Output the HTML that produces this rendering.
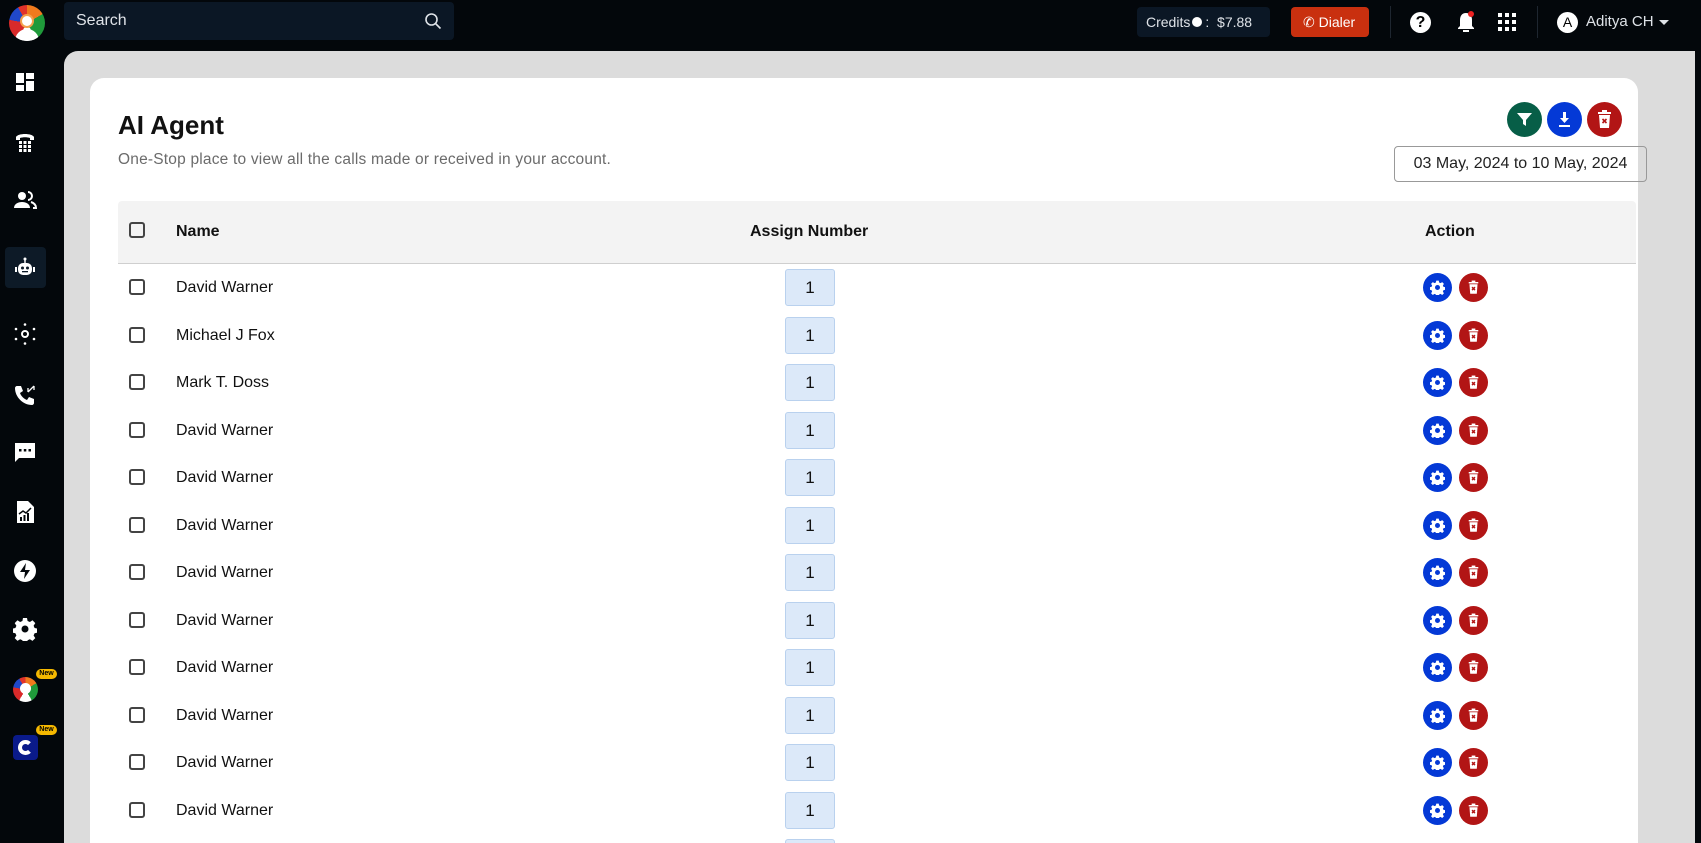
<!DOCTYPE html>
<html style="width:1701px;height:843px;overflow:hidden"><head><meta charset="utf-8"><style>
*{margin:0;padding:0;box-sizing:border-box}
html,body{width:1701px;height:843px;overflow:hidden}
body{background:#03070b;font-family:"Liberation Sans",sans-serif;position:relative}
#wrap{position:absolute;left:0;top:0;width:1701px;height:843px;overflow:hidden}
.abs{position:absolute}
.side{left:0;top:0;width:64px;height:843px;background:#03070b}
.ic{position:absolute;left:13px;width:24px;height:24px}
.gray{left:64px;top:51px;width:1631px;height:792px;background:#dcdcdc;border-top-left-radius:14px}
.card{left:90px;top:78px;width:1548px;height:765px;background:#fff;border-radius:14px 14px 0 0}
.row{position:absolute;left:118px;width:1518px;height:47px}
.cb{position:absolute;left:11px;width:16px;height:16px;border:2px solid #444;border-radius:3px;background:#fff}
.nm{position:absolute;left:58px;font-size:16px;color:#111}
.num{position:absolute;left:667px;width:50px;height:37px;background:#dce9f9;border:1px solid #b9d1ee;border-radius:3px;text-align:center;line-height:36px;font-size:17px;color:#111}
.rb{position:absolute;width:29px;height:29px;border-radius:50%}
</style></head><body><div id="wrap">
<div class="abs side"></div>
<div class="abs" style="left:9px;top:5px;width:36px;height:36px;border-radius:50%;background:conic-gradient(#f07a1d 0 60deg,#1f9a3a 60deg 150deg,#fff 150deg 210deg,#d92a2a 210deg 280deg,#2048c9 280deg 330deg,#e1322a 330deg 360deg);overflow:hidden">
<div class="abs" style="left:11px;top:9px;width:14px;height:14px;border-radius:50%;background:#fff;border:2px solid #f3a04a"></div>
<div class="abs" style="left:6px;top:24px;width:24px;height:16px;border-radius:12px 12px 0 0;background:#fff"></div></div>
<div class="abs" style="left:64px;top:2px;width:390px;height:38px;background:#0b1725;border-radius:4px"></div>
<div class="abs" style="left:76px;top:12px;color:#dfe3e8;font-size:16px">Search</div>
<svg class="abs" style="left:424px;top:12px" width="18" height="18" viewBox="0 0 18 18"><circle cx="7.5" cy="7.5" r="5.5" stroke="#dfe3e8" stroke-width="1.6" fill="none"/><path d="M11.5 11.5l5 5" stroke="#dfe3e8" stroke-width="1.6"/></svg>
<div class="abs" style="left:1137px;top:7px;width:133px;height:30px;background:#0b1725;border-radius:4px;color:#dfe3e8;font-size:14px;line-height:30px;padding-left:9px">Credits<span style="display:inline-block;width:10px;height:10px;background:#fff;border-radius:50%;margin:0 3px 0 2px"></span>:&nbsp; $7.88</div>
<div class="abs" style="left:1291px;top:7px;width:78px;height:30px;background:#c9300f;border-radius:4px;color:#fff;font-size:14px;line-height:30px;padding-left:12px">&#9990; Dialer</div>
<div class="abs" style="left:1390px;top:6px;width:1px;height:32px;background:#1e2630"></div>
<div class="abs" style="left:1410px;top:12px;width:21px;height:21px;border-radius:50%;background:#fff;color:#000;font-weight:bold;font-size:16px;text-align:center;line-height:21px">?</div>
<svg class="abs" style="left:1455px;top:10px" width="22" height="24" viewBox="0 0 22 24"><path d="M11 3c-4 0-6 3-6 7v6l-2 2v1h16v-1l-2-2v-6c0-4-2-7-6-7z" fill="#fff"/><rect x="8" y="20" width="6" height="2" fill="#fff"/><circle cx="16" cy="4" r="3" fill="#e22"/></svg>
<svg class="abs" style="left:1498px;top:13px" width="18" height="18"><g fill="#fff"><rect x="0" y="0" width="4" height="4"/><rect x="7" y="0" width="4" height="4"/><rect x="14" y="0" width="4" height="4"/><rect x="0" y="7" width="4" height="4"/><rect x="7" y="7" width="4" height="4"/><rect x="14" y="7" width="4" height="4"/><rect x="0" y="14" width="4" height="4"/><rect x="7" y="14" width="4" height="4"/><rect x="14" y="14" width="4" height="4"/></g></svg>
<div class="abs" style="left:1537px;top:6px;width:1px;height:32px;background:#1e2630"></div>
<div class="abs" style="left:1557px;top:12px;width:21px;height:21px;border-radius:50%;background:#fff;color:#000;font-size:14px;text-align:center;line-height:21px">A</div>
<div class="abs" style="left:1586px;top:13px;color:#dfe3e8;font-size:15px">Aditya CH</div>
<div class="abs" style="left:1659px;top:20px;border-left:5px solid transparent;border-right:5px solid transparent;border-top:5px solid #dfe3e8"></div>
<svg class="ic" style="top:70px" viewBox="0 0 24 24"><path d="M3 3h8v10H3zM13 3h8v6h-8zM13 11h8v10h-8zM3 15h8v6H3z" fill="#fff"/></svg>
<svg class="ic" style="top:129px" viewBox="0 0 24 24"><path d="M3 8c2-4 16-4 18 0v3h-4V9c-3-1-7-1-10 0v2H3z" fill="#fff"/><g fill="#fff"><rect x="6" y="12" width="3" height="3"/><rect x="10.5" y="12" width="3" height="3"/><rect x="15" y="12" width="3" height="3"/><rect x="6" y="16" width="3" height="3"/><rect x="10.5" y="16" width="3" height="3"/><rect x="15" y="16" width="3" height="3"/><rect x="6" y="20" width="3" height="3"/><rect x="10.5" y="20" width="3" height="3"/><rect x="15" y="20" width="3" height="3"/></g></svg>
<svg class="ic" style="top:188px" viewBox="0 0 24 24"><circle cx="9" cy="8" r="4" fill="#fff"/><path d="M1 20c0-4 4-6 8-6s8 2 8 6z" fill="#fff"/><path d="M15 4a4 4 0 010 8M18 14c3 1 5 3 5 6h-3" stroke="#fff" stroke-width="2" fill="none"/></svg>
<div class="abs" style="left:5px;top:247px;width:41px;height:41px;background:#0d1a27;border-radius:4px"></div>
<svg class="ic" style="top:256px" viewBox="0 0 24 24"><circle cx="12" cy="3" r="1.5" fill="#fff"/><rect x="11.3" y="3" width="1.4" height="4" fill="#fff"/><rect x="5" y="7" width="14" height="12" rx="5" fill="#fff"/><circle cx="9.5" cy="12" r="1.5" fill="#0d1a27"/><circle cx="14.5" cy="12" r="1.5" fill="#0d1a27"/><rect x="9" y="15" width="6" height="1.3" fill="#0d1a27"/><rect x="2" y="11" width="2" height="5" fill="#fff"/><rect x="20" y="11" width="2" height="5" fill="#fff"/></svg>
<svg class="ic" style="top:322px" viewBox="0 0 24 24"><circle cx="12" cy="12" r="3" stroke="#fff" stroke-width="2" fill="none"/><g fill="#fff"><circle cx="12" cy="2.5" r="1.3"/><circle cx="12" cy="21.5" r="1.3"/><circle cx="3" cy="7" r="1.3"/><circle cx="21" cy="7" r="1.3"/><circle cx="3" cy="17" r="1.3"/><circle cx="21" cy="17" r="1.3"/></g></svg>
<svg class="ic" style="top:383px" viewBox="0 0 24 24"><path d="M4 3h4l2 5-3 2c1 3 4 6 7 7l2-3 5 2v4c0 1-1 2-2 2C10 22 2 14 2 5c0-1 1-2 2-2z" fill="#fff"/><path d="M15 9l6-6M15 9v-4M21 3v4" stroke="#fff" stroke-width="1.3" fill="none"/></svg>
<svg class="ic" style="top:440px" viewBox="0 0 24 24"><path d="M2 3h20v15H6l-4 4z" fill="#fff"/><g fill="#03070b"><rect x="6" y="9" width="2.5" height="2.5"/><rect x="10.8" y="9" width="2.5" height="2.5"/><rect x="15.5" y="9" width="2.5" height="2.5"/></g></svg>
<svg class="ic" style="top:500px" viewBox="0 0 24 24"><path d="M4 1h11l6 6v16H4z" fill="#fff"/><g fill="#03070b"><rect x="7" y="17" width="2" height="4"/><rect x="10.5" y="15" width="2" height="6"/><rect x="14" y="13" width="2" height="8"/></g><path d="M6 14l4-3 3 2 5-5" stroke="#03070b" stroke-width="1.5" fill="none"/></svg>
<svg class="ic" style="top:559px" viewBox="0 0 24 24"><circle cx="12" cy="12" r="11" fill="#fff"/><path d="M13 4l-6 9h5l-1 7 6-9h-5z" fill="#03070b"/></svg>
<svg class="ic" style="top:617px" viewBox="0 0 24 24"><path d="M10 1h4l.6 3 2.3 1 2.6-1.7 2.8 2.8-1.7 2.6 1 2.3 3 .6v4l-3 .6-1 2.3 1.7 2.6-2.8 2.8-2.6-1.7-2.300 1-.6 3h-4l-.6-3-2.3-1-2.6 1.7-2.8-2.8 1.7-2.6-1-2.3-3-.6v-4l3-.6 1-2.3-1.7-2.6 2.8-2.8 2.6 1.7 2.3-1z" fill="#fff"/><circle cx="12" cy="12" r="3.5" fill="#03070b"/></svg>
<div class="abs" style="left:13px;top:677px;width:25px;height:25px;border-radius:50%;background:conic-gradient(#f07a1d 0 60deg,#1f9a3a 60deg 150deg,#fff 150deg 210deg,#d92a2a 210deg 280deg,#2048c9 280deg 330deg,#e1322a 330deg);overflow:hidden"><div class="abs" style="left:7px;top:6px;width:11px;height:11px;border-radius:50%;background:#fff"></div></div>
<div class="abs" style="left:36px;top:669px;width:21px;height:10px;border-radius:5px;background:#f5b800;font-size:7px;font-weight:bold;text-align:center;line-height:10px;color:#000">New</div>
<div class="abs" style="left:13px;top:735px;width:25px;height:25px;border-radius:4px;background:#0a1a8a"><div class="abs" style="left:5px;top:5px;width:15px;height:15px;border-radius:50%;border:4px solid #fff;border-right-color:transparent"></div></div>
<div class="abs" style="left:36px;top:725px;width:21px;height:10px;border-radius:5px;background:#f5b800;font-size:7px;font-weight:bold;text-align:center;line-height:10px;color:#000">New</div>
<div class="abs gray"></div>
<div class="abs card"></div>
<div class="abs" style="left:118px;top:110px;font-size:26px;font-weight:bold;color:#111">AI Agent</div>
<div class="abs" style="left:118px;top:151px;font-size:15.5px;color:#6b6b6b;letter-spacing:0.2px">One-Stop place to view all the calls made or received in your account.</div>
<div class="abs rb" style="left:1507px;top:102px;width:35px;height:35px;background:#075e47"><svg style="margin:9px" width="17" height="17" viewBox="0 0 17 17"><path d="M1 2h15l-6 7v6l-3-2V9z" fill="#fff"/></svg></div>
<div class="abs rb" style="left:1547px;top:102px;width:35px;height:35px;background:#0439d6"><svg style="margin:9px" width="17" height="17" viewBox="0 0 17 17"><path d="M7 1h3v6h3l-4.5 5L4 7h3z" fill="#fff"/><rect x="3" y="14" width="11" height="2" fill="#fff"/></svg></div>
<div class="abs rb" style="left:1587px;top:102px;width:35px;height:35px;background:#b21515"><svg style="margin:8px 10px" width="15" height="19" viewBox="0 0 15 19"><rect x="1" y="2" width="13" height="2" fill="#fff"/><rect x="5" y="0" width="5" height="2" fill="#fff"/><path d="M2 5h11l-1 13H3z" fill="#fff"/><path d="M5.5 9l4 4M9.5 9l-4 4" stroke="#b21515" stroke-width="1.6"/></svg></div>
<div class="abs" style="left:1394px;top:146px;width:253px;height:36px;border:1px solid #999;border-radius:4px;font-size:16px;color:#222;text-align:center;line-height:34px">03 May, 2024 to 10 May, 2024</div>
<div class="abs" style="left:118px;top:201px;width:1518px;height:63px;background:#f3f3f3;border-bottom:1px solid #cfcfcf;border-radius:4px 4px 0 0"></div>
<div class="abs cb" style="left:129px;top:222px;background:#f3f3f3"></div>
<div class="abs" style="left:176px;top:223px;font-size:16px;font-weight:bold;color:#111">Name</div>
<div class="abs" style="left:750px;top:223px;font-size:16px;font-weight:bold;color:#111">Assign Number</div>
<div class="abs" style="left:1425px;top:223px;font-size:16px;font-weight:bold;color:#111">Action</div>
<div id="rows"></div>
<script>
var names=["David Warner","Michael J Fox","Mark T. Doss","David Warner","David Warner","David Warner","David Warner","David Warner","David Warner","David Warner","David Warner","David Warner","David Warner"];
var h="";
for(var i=0;i<13;i++){var c=287.5+47.5*i;var t=c-23.5;
h+='<div class="row" style="top:'+t+'px"><div class="cb" style="top:15px"></div><div class="nm" style="top:15px">'+names[i]+'</div><div class="num" style="top:5px">1</div>'+
'<div class="rb" style="left:1305px;top:9px;background:#0439d6"><svg style="margin:7px" width="15" height="15" viewBox="0 0 24 24"><path d="M10 1h4l.6 3 2.3 1 2.6-1.7 2.8 2.8-1.7 2.6 1 2.3 3 .6v4l-3 .6-1 2.3 1.7 2.6-2.8 2.8-2.6-1.7-2.3 1-.6 3h-4l-.6-3-2.3-1-2.6 1.7-2.8-2.8 1.7-2.6-1-2.3-3-.6v-4l3-.6 1-2.3-1.7-2.6 2.8-2.8 2.6 1.7 2.3-1z" fill="#fff"/><circle cx="12" cy="12" r="4" fill="#0439d6"/></svg></div>'+
'<div class="rb" style="left:1341px;top:9px;background:#b21515"><svg style="margin:7px 9px" width="11" height="15" viewBox="0 0 15 19"><rect x="1" y="2" width="13" height="2" fill="#fff"/><rect x="5" y="0" width="5" height="2" fill="#fff"/><path d="M2 5h11l-1 13H3z" fill="#fff"/><path d="M5.5 9l4 4M9.5 9l-4 4" stroke="#b21515" stroke-width="2"/></svg></div></div>';}
document.getElementById("rows").innerHTML=h;
</script>
</div></body></html>
